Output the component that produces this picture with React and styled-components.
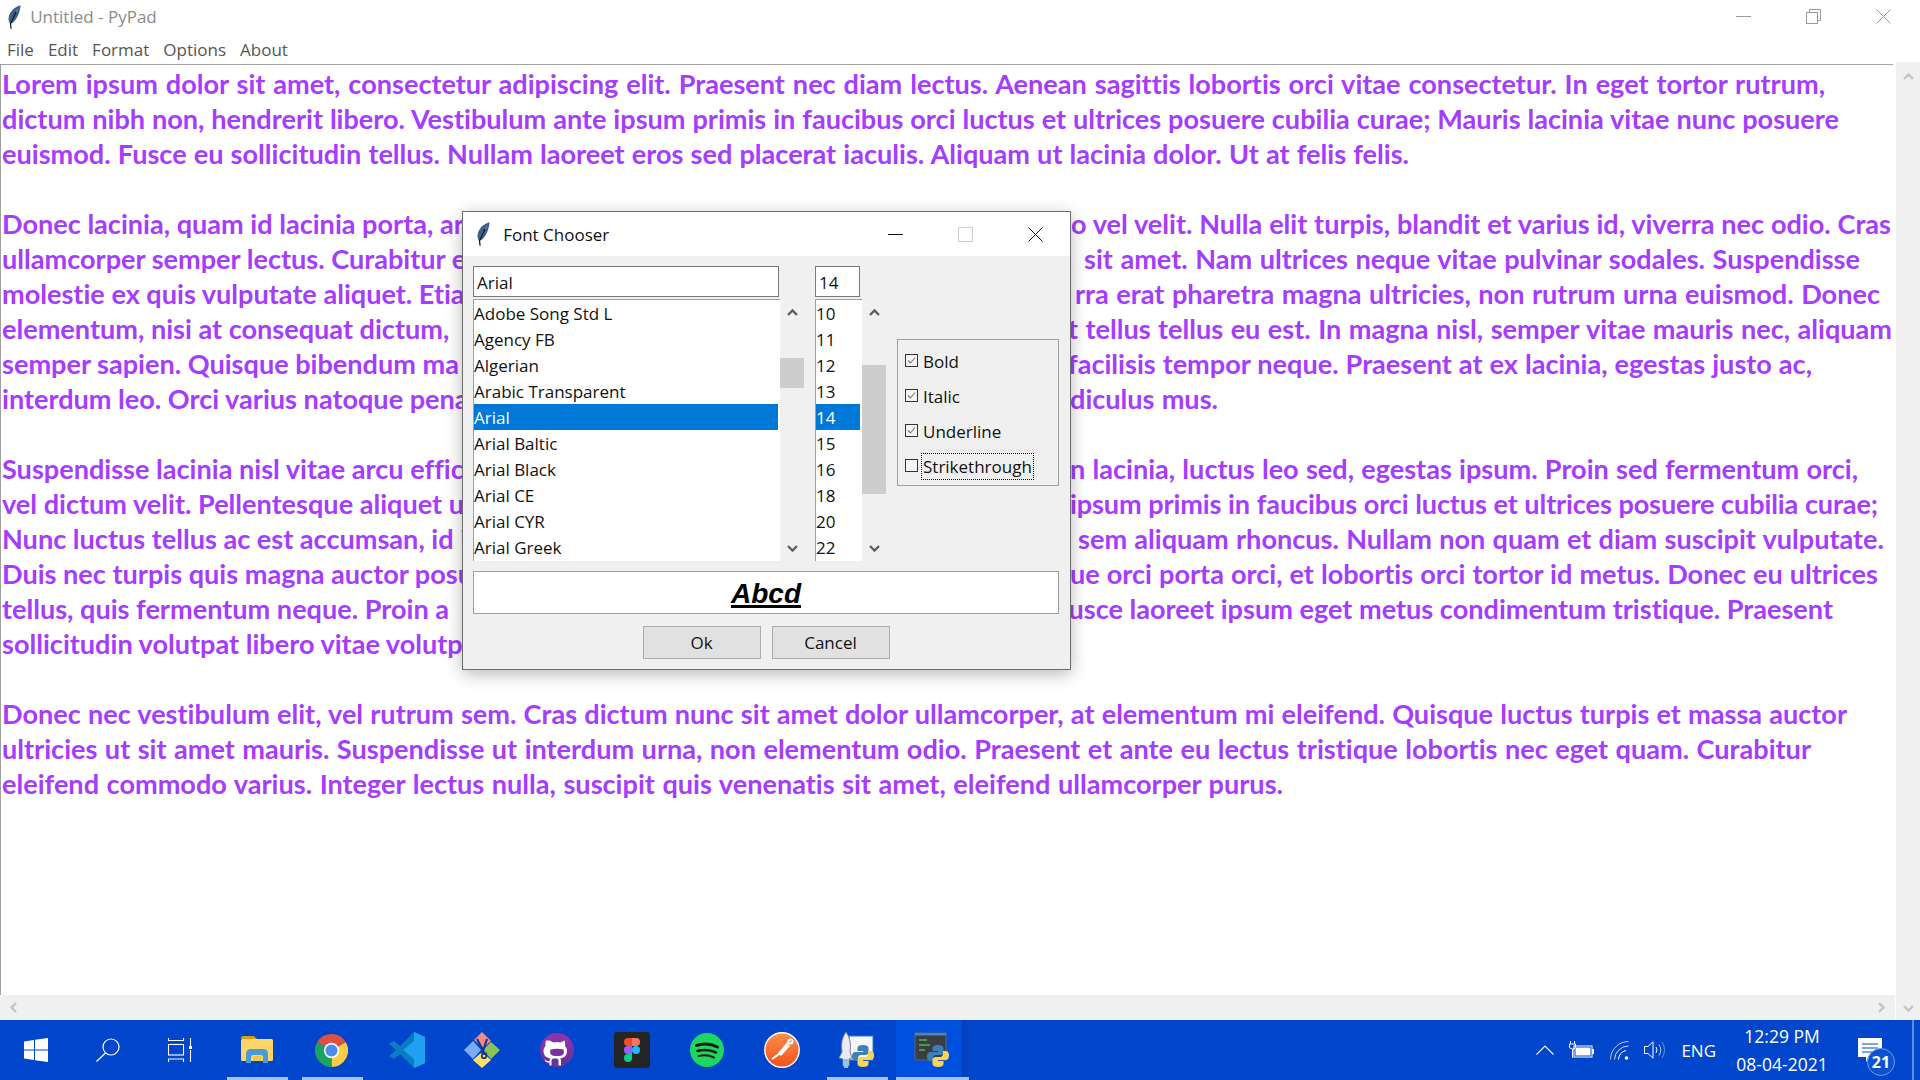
import React from 'react'
import styled, {createGlobalStyle} from 'styled-components'

const Global = createGlobalStyle`
  html, body {
    margin: 0;
    padding: 0;
    background: #fff;
  }
  * {
    box-sizing: border-box;
  }
`

const UI_FONT = `"Open Sans", "Noto Sans", sans-serif`

// main window
const Page = styled.div`
  position: relative;
  width: 1920px;
  height: 1080px;
  overflow: hidden;
  display: flex;
  flex-direction: column;
  font-family: ${UI_FONT};
`
const TitleBar = styled.div`
  height: 33px;
  flex: none;
  display: flex;
  align-items: center;
  padding-left: 8px;
  background: #fff;
`
const TitleText = styled.span`
  margin-left: 9px;
  font-size: 17px;
  color: #8b8b8b;
`
const WinButtons = styled.div`
  margin-left: auto;
  display: flex;
  align-items: center;
  gap: 55px;
  padding-right: 29px;
  padding-bottom: 1px;
  height: 100%;
`
const MenuBar = styled.div`
  height: 29px;
  flex: none;
  display: flex;
  align-items: center;
  padding: 4px 0 0 7px;
  gap: 14px;
  font-size: 17px;
  color: #555;
`
const Workspace = styled.div`
  flex: 1;
  min-height: 0;
  display: flex;
`
const EditorColumn = styled.div`
  flex: 1;
  min-width: 0;
  display: flex;
  flex-direction: column;
`
const Editor = styled.div`
  flex: 1;
  min-height: 0;
  margin-top: 2px;
  margin-right: 2px;
  border-top: 1px solid #a0a0a0;
  border-left: 1px solid #a0a0a0;
  padding: 1px 0 0 1px;
  overflow: hidden;
  background: #fff;
  font-family: "Lato", "Noto Sans", sans-serif;
  font-weight: 700;
  font-size: 27.1px;
  font-variant-ligatures: none;
  line-height: 35px;
  color: #a53cff;
`
const Line = styled.div`
  height: 35px;
  display: flex;
  justify-content: space-between;
  white-space: nowrap;
  width: ${({$w})=> $w ? `${$w}px` : 'auto'};
`
// a run of text that fills its width, its word gaps stretched to reach the end
const FullRun = styled.span`
  flex: ${({$w})=> $w ? `none` : 1};
  width: ${({$w})=> $w ? `${$w}px` : 'auto'};
  white-space: normal;
  text-align: justify;
  text-align-last: justify;
  letter-spacing: ${({$tight})=> $tight ? '-0.12px' : 'normal'};
`
const HScroll = styled.div`
  height: 25px;
  flex: none;
  display: flex;
  align-items: center;
  justify-content: space-between;
  padding: 0 8px;
  background: #f0f0f0;
`
const VScroll = styled.div`
  width: 25px;
  flex: none;
  display: flex;
  flex-direction: column;
  align-items: center;
  justify-content: space-between;
  padding: 10px 0 7px;
  background: #f0f0f0;
  border-left: 1px solid #fff;
`
const ChevronSvg = styled.svg`
  display: block;
  transform: rotate(${({$turn})=> $turn}deg);
`

// font chooser dialog
const Dialog = styled.div`
  position: absolute;
  left: 462px;
  top: 211px;
  width: 609px;
  height: 459px;
  background: #f0f0f0;
  border: 1px solid #6e6e6e;
  box-shadow: 0 4px 16px rgba(0, 0, 0, 0.28);
  font-size: 17px;
  color: #111;
`
const DialogTitle = styled.div`
  height: 44px;
  display: flex;
  align-items: center;
  padding-left: 14px;
  background: #fff;
`
const DialogTitleText = styled.span`
  margin-left: 13px;
  font-size: 17px;
`
const DialogButtons = styled.div`
  margin-left: auto;
  display: flex;
  align-items: center;
  gap: 55px;
  padding-right: 27px;
`
const DialogBody = styled.div`
  padding: 10px 11px 0 10px;
`
const Chooser = styled.div`
  display: grid;
  grid-template-columns: 307px 24px 11px 47px 24px 11px 162px;
  grid-template-rows: 31px 2px 262px;
`
const Entry = styled.div`
  grid-column: ${({$col})=> $col};
  grid-row: 1;
  width: ${({$w})=> $w}px;
  border: 1px solid #7a7a7a;
  background: #fff;
  display: flex;
  align-items: center;
  padding: 1px 0 0 3px;
  line-height: 1;
`
const ListBox = styled.div`
  grid-column: ${({$col})=> $col};
  grid-row: 3;
  border-top: 1px solid #a0a0a0;
  border-left: 1px solid #a0a0a0;
  background: #fff;
  overflow: hidden;
`
const ListRow = styled.div`
  height: 26px;
  line-height: 27px;
  margin-right: 2px;
  white-space: nowrap;
  background: ${({$on})=> $on ? '#0078d7' : 'transparent'};
  color: ${({$on})=> $on ? '#fff' : '#111'};
`
const ListScroll = styled.div`
  grid-column: ${({$col})=> $col};
  grid-row: 3;
  position: relative;
  display: flex;
  flex-direction: column;
  align-items: center;
  justify-content: space-between;
  padding: 9px 0 8px;
`
const Thumb = styled.div`
  position: absolute;
  left: 0;
  right: 0;
  top: ${({$top})=> $top}px;
  height: ${({$h})=> $h}px;
  background: #cdcdcd;
`
const OptionGroup = styled.div`
  grid-column: 7;
  grid-row: 3;
  align-self: start;
  margin-top: 40px;
  height: 147px;
  border: 1px solid #a0a0a0;
  padding: 3px 0 0 7px;
`
const Option = styled.label`
  height: 35px;
  display: flex;
  align-items: center;
  gap: 4px;
`
const CheckBox = styled.span`
  width: 13px;
  height: 13px;
  flex: none;
  border: 1px solid #333;
  background: #f6f6f6;
  display: flex;
  align-items: center;
  justify-content: center;
`
const OptionText = styled.span`
  line-height: 25px;
  margin-top: 2px;
  padding: 0 1px;
  outline: ${({$focus})=> $focus ? '1px dotted #111' : 'none'};
`
const Preview = styled.div`
  margin-top: 10px;
  height: 43px;
  border: 1px solid #a0a0a0;
  background: #fff;
  display: flex;
  align-items: center;
  justify-content: center;
  padding-top: 2px;
  font-family: "Liberation Sans", Arial, sans-serif;
  font-weight: 700;
  font-style: italic;
  text-decoration: underline;
  text-decoration-thickness: 3px;
  font-size: 28px;
  color: #000;
`
const ButtonRow = styled.div`
  margin-top: 12px;
  display: flex;
  justify-content: center;
  gap: 11px;
`
const DialogButton = styled.button`
  width: 118px;
  height: 33px;
  border: 1px solid #adadad;
  background: #e1e1e1;
  font-family: ${UI_FONT};
  font-size: 17px;
  color: #111;
  padding: 0;
`

// taskbar
const Taskbar = styled.div`
  position: relative;
  height: 60px;
  flex: none;
  display: flex;
  align-items: stretch;
  background: #0046cc;
  color: #fff;
`
const SystemSlot = styled.div`
  width: 72px;
  display: flex;
  align-items: center;
  justify-content: center;
`
const AppStrip = styled.div`
  display: flex;
  padding-left: 3px;
`
const AppSlot = styled.div`
  position: relative;
  width: 75px;
  display: flex;
  align-items: center;
  justify-content: center;
  background: ${({$active})=> $active ? 'linear-gradient(to right, transparent 2px, #0050e0 2px, #0050e0 68px, #003fb8 68px, #0046cc 75px)' : 'transparent'};
  &::after {
    content: '';
    display: ${({$open})=> $open ? 'block' : 'none'};
    position: absolute;
    bottom: 0;
    height: 3px;
    left: ${({$active})=> $active ? '2px' : '8px'};
    right: ${({$active})=> $active ? '0' : '6px'};
    background: #a9c2f5;
  }
`
const Tray = styled.div`
  margin-left: auto;
  display: flex;
  align-items: center;
  padding-right: 28px;
`
const TrayIcon = styled.span`
  display: flex;
  margin-right: ${({$gap})=> $gap}px;
`
const Lang = styled.span`
  font-size: 17px;
  margin-right: 8px;
`
const Clock = styled.div`
  width: 116px;
  text-align: center;
  font-size: 17.5px;
  line-height: 28px;
  margin-right: 18px;
`
const Notice = styled.div`
  position: relative;
  width: 34px;
  height: 60px;
  display: flex;
  padding-top: 18px;
`
const NoticeBadge = styled.span`
  position: absolute;
  left: 9px;
  top: 28px;
  width: 28px;
  height: 28px;
  border-radius: 50%;
  background: #0a52d0;
  border: 1px solid #6f9cec;
  display: flex;
  align-items: center;
  justify-content: center;
  font-size: 16px;
  font-weight: 700;
`
const EdgeLine = styled.div`
  position: absolute;
  right: 6px;
  top: 0;
  bottom: 0;
  width: 2px;
  background: #5d8be2;
`

// little drawings
const Feather = ({h = 24}) => (
  <svg width={h * 0.55} height={h} viewBox="0 0 13 24" style={{display: 'block', flex: 'none'}}>
    <path d="M12.500 0.300C6.500 1.500 1 7 .4 13.500c-.2 2.200.8 4.200 2 5.500C7.500 17 11.800 9 12.500.3z" fill="#3f5f8c" />
    <path d="M10 4L3 16" stroke="#8aa3c6" strokeWidth="0.700" />
    <path d="M8 7L2.400 18.500 3 23.800" stroke="#0c0c0c" strokeWidth="1.200" fill="none" />
  </svg>
)

const Chevron = ({turn = 0, color = '#5f5f5f'}) => (
  <ChevronSvg $turn={turn} width="11" height="9" viewBox="0 0 11 9">
    <polyline points="1,7 5.5,2.5 10,7" fill="none" stroke={color} strokeWidth="2.4" />
  </ChevronSvg>
)

const Minimize = ({color, w = 15}) => (
  <svg width={w} height="15" viewBox="0 0 15 15" style={{display: 'block'}}>
    <path d="M0 7.5H15" stroke={color} strokeWidth="1" />
  </svg>
)
const Restore = ({color}) => (
  <svg width="15" height="15" viewBox="0 0 15 15" style={{display: 'block'}}>
    <rect x="0.5" y="3.5" width="11" height="11" fill="none" stroke={color} />
    <path d="M3.5 3.5V0.5H14.5V11.5H11.5" fill="none" stroke={color} />
  </svg>
)
const Square = ({color}) => (
  <svg width="15" height="15" viewBox="0 0 15 15" style={{display: 'block'}}>
    <rect x="0.5" y="0.5" width="14" height="14" fill="none" stroke={color} />
  </svg>
)
const Close = ({color, w = 15}) => (
  <svg width={w} height={w} viewBox="0 0 15 15" style={{display: 'block'}}>
    <path d="M0.5 0.5L14.5 14.5M14.5 0.5L0.5 14.5" stroke={color} strokeWidth="1" />
  </svg>
)
const Tick = () => (
  <svg width="9" height="9" viewBox="0 0 9 9">
    <polyline points="1,4.5 3.5,7 8,1.5" fill="none" stroke="#777" strokeWidth="1.1" />
  </svg>
)

const WindowsLogo = () => (
  <svg width="24" height="24" viewBox="0 0 24 24" fill="#fff">
    <path d="M0 3.4L10 2v9.4H0zM11 1.8L24 0v11.4H11zM0 12.5h10V22L0 20.6zM11 12.5h13V24l-13-1.8z" />
  </svg>
)
const SearchIcon = () => (
  <svg width="24" height="24" viewBox="0 0 24 24" fill="none" stroke="#fff" strokeWidth="1.2">
    <circle cx="15" cy="9" r="8" />
    <path d="M9.5 15L0.5 23.5" />
  </svg>
)
const TaskViewIcon = () => (
  <svg width="24" height="24" viewBox="0 0 24 24" fill="none" stroke="#fff" strokeWidth="1.1">
    <path d="M0.5 0v2.5h15V0M0.5 24v-3h15v3" />
    <rect x="0.5" y="6.5" width="15" height="10.5" />
    <path d="M22.5 0v8M22.5 12v12" />
    <rect x="21" y="8" width="3" height="3" fill="#fff" stroke="none" />
  </svg>
)
const ExplorerIcon = () => (
  <svg width="32" height="28" viewBox="0 0 32 28">
    <path d="M0 2q0-2 2-2h11l3 3h-16z" fill="#d99e12" />
    <rect x="0" y="3" width="32" height="22" rx="1.5" fill="#fdd667" />
    <path d="M5 27v-9q0-5 5-5h12q5 0 5 5v9h-5v-6q0-2-2-2h-8q-2 0-2 2v6z" fill="#4a9cd6" />
    <rect x="12" y="20" width="8" height="5" fill="#f5c945" />
  </svg>
)
const ChromeIcon = () => (
  <svg width="33" height="33" viewBox="0 0 24 24">
    <path d="M12 12L1.6 6A12 12 0 0 1 22.4 6z" fill="#dd5044" />
    <path d="M12 12L22.4 6A12 12 0 0 1 12 24z" fill="#fbcc45" />
    <path d="M12 12L12 24A12 12 0 0 1 1.6 6z" fill="#1da261" />
    <circle cx="12" cy="12" r="5.6" fill="#fff" />
    <circle cx="12" cy="12" r="4.4" fill="#4d8df0" />
  </svg>
)
const VsCodeIcon = () => (
  <svg width="36" height="36" viewBox="0 0 36 36">
    <path d="M25 0L11 14 5 9 0 12l7 6-7 6 5 3 6-5 14 14 3-2V2z" fill="#0a7cc4" />
    <path d="M25 0l11 5v26l-11 5 3-2V2z" fill="#1fa0f0" />
    <path d="M25 0l11 5v26l-11 5zM25 9L14 18l11 9z" fill="#1fa0f0" fillRule="evenodd" />
  </svg>
)
const ToolIcon = () => (
  <svg width="36" height="36" viewBox="0 0 36 36">
    <path d="M18 0l9 9-8 7-9-8z" fill="#f58a84" />
    <path d="M9 9l8 9-8 9-9-9z" fill="#7cabff" />
    <path d="M27 10l9 8-9 9-8-9z" fill="#8ac354" />
    <path d="M18 20l9 8-9 8-9-8z" fill="#ffe067" />
    <path d="M13 7l7 13M23 7l-4 12M16 20l7 2" stroke="#17368f" strokeWidth="2.200" fill="none" />
    <circle cx="20" cy="24" r="2.200" fill="none" stroke="#17368f" strokeWidth="1.800" />
  </svg>
)
const GithubIcon = () => (
  <svg width="34" height="34" viewBox="0 0 34 34">
    <defs>
      <linearGradient id="gh" x1="0" y1="0" x2="0" y2="1">
        <stop offset="0" stopColor="#9135ad" />
        <stop offset="1" stopColor="#63309c" />
      </linearGradient>
    </defs>
    <circle cx="17" cy="17" r="17" fill="url(#gh)" />
    <path d="M9.5 7.500l4 2a12 12 0 0 1 7 0l4-2q1.300 3 .5 5.500c1.400 1.600 2 3 2 5 0 5-3.500 7-7 7.500 1 .7 1 2 1 3v4h-2.500v-5q0-2-2-2h-3q-2 0-2 2v5H9.500v-3c-2.500.4-4-.5-5-3 1.500.5 2.800 2.300 5 1.500q0-1.500 1-2.500c-3.500-.5-7-2.500-7-7.500 0-2 .6-3.400 2-5q-.8-2.500 .5-5.500z" fill="#fff" />
    <path d="M10.500 16.500q6.500-1.500 13 0 1.500 5-2.500 6.200-4 .8-8 0-4-1.200-2.500-6.200z" fill="#7a30a4" />
  </svg>
)
const FigmaIcon = () => (
  <svg width="36" height="36" viewBox="0 0 36 36">
    <rect width="36" height="36" rx="3" fill="#252525" />
    <path d="M18 6h-4a4 4 0 0 0 0 8h4z" fill="#f24e1e" />
    <path d="M18 6h4a4 4 0 0 1 0 8h-4z" fill="#ff7262" />
    <path d="M18 14h-4a4 4 0 0 0 0 8h4z" fill="#a259ff" />
    <circle cx="22" cy="18" r="4" fill="#1abcfe" />
    <path d="M14 22h4v4a4 4 0 1 1-4-4z" fill="#0acf83" />
  </svg>
)
const SpotifyIcon = () => (
  <svg width="34" height="34" viewBox="0 0 34 34">
    <circle cx="17" cy="17" r="17" fill="#1ed760" />
    <g fill="none" stroke="#1a1a1a" strokeLinecap="round">
      <path d="M6.500 12.500q11-3.500 21 1.500" strokeWidth="3" />
      <path d="M7.500 18q9.500-2.800 18.500 1.500" strokeWidth="2.500" />
      <path d="M8.500 23q8.500-2 15.500 1.500" strokeWidth="2" />
    </g>
  </svg>
)
const PostmanIcon = () => (
  <svg width="36" height="36" viewBox="0 0 36 36">
    <defs>
      <linearGradient id="pm" x1="0" y1="0" x2="0" y2="1">
        <stop offset="0" stopColor="#ff8f4a" />
        <stop offset="1" stopColor="#f2501f" />
      </linearGradient>
    </defs>
    <circle cx="18" cy="18" r="17.200" fill="url(#pm)" stroke="#fff" strokeWidth="1.400" />
    <path d="M8 27l7-5 9-11" stroke="#fff" strokeWidth="2" fill="none" />
    <path d="M14 21l9-10 3 3-9 10z" fill="#fff" />
    <circle cx="26.500" cy="9.500" r="3" fill="#fff" />
    <path d="M25 10.500l3-2" stroke="#f2501f" strokeWidth="0.800" />
  </svg>
)
const PythonLogo = ({size}) => (
  <svg width={size} height={size} viewBox="0 0 24 24" style={{position: 'absolute', right: 0, bottom: 0}}>
    <path d="M12 1c-3.500 0-5.500 1-5.500 3v3h5.500v1H4.500C2 8 1 10 1 12.500S2 17 4.500 17H7v-3c0-1.800 1.500-3 3-3h4.500c1.500 0 3-1.200 3-3V4c0-2-2.500-3-5.500-3z" fill="#3f7fb5" />
    <path d="M12 23c3.500 0 5.500-1 5.500-3v-3H12v-1h7.500c2.500 0 3.500-2 3.500-4.500S22 7 19.500 7H17v3c0 1.800-1.500 3-3 3H9.500c-1.500 0-3 1.200-3 3v4c0 2 2.500 3 5.500 3z" fill="#f7d558" />
  </svg>
)
const AppArt = styled.span`
  position: relative;
  display: block;
  width: ${({$w})=> $w}px;
  height: ${({$h})=> $h}px;
`
const RocketPyIcon = () => (
  <AppArt $w={36} $h={36}>
    <svg width="36" height="36" viewBox="0 0 36 36" style={{display: 'block'}}>
      <rect x="10" y="4" width="24" height="24" fill="#f4f6fa" stroke="#2b7fc0" />
      <path d="M7 0q-6 8-4 20l-3 6 4 1v7h6v-7l3-1-2-6Q13 8 7 0z" fill="#e8ecf2" stroke="#7a8496" strokeWidth="1" />
      <rect x="5" y="27" width="4" height="9" fill="#8fc4ee" />
    </svg>
    <PythonLogo size={24} />
  </AppArt>
)
const ConsolePyIcon = () => (
  <AppArt $w={36} $h={36}>
    <svg width="36" height="36" viewBox="0 0 36 36" style={{display: 'block'}}>
      <rect x="1" y="1" width="31" height="27" fill="#3a3d42" stroke="#5e6570" />
      <rect x="1" y="1" width="31" height="2.500" fill="#3f8ac4" />
      <path d="M5 8h8M5 13h11M5 18h6" stroke="#58b25a" strokeWidth="1.400" />
    </svg>
    <PythonLogo size={24} />
  </AppArt>
)

const UpCaret = () => (
  <svg width="18" height="10" viewBox="0 0 18 10" fill="none" stroke="#fff" strokeWidth="1.100" style={{display: 'block'}}>
    <polyline points="0.500,9.500 9,1 17.500,9.500" />
  </svg>
)
const BatteryIcon = () => (
  <svg width="25" height="18" viewBox="0 0 25 18" style={{display: 'block'}}>
    <path d="M1.500 0v3M5.500 0v3M0.500 3h6v3q0 2-3 2t-3-2zM3.500 8v9" stroke="#fff" strokeWidth="1" fill="none" />
    <rect x="5" y="5" width="18" height="11" fill="none" stroke="#fff" />
    <rect x="6.500" y="6.500" width="15" height="8" fill="#fff" />
    <rect x="23" y="8" width="2" height="5" fill="#fff" />
  </svg>
)
const WifiIcon = () => (
  <svg width="19" height="19" viewBox="0 0 19 19" fill="none" stroke="#fff" style={{display: 'block'}}>
    <path d="M0.500 18.500A18 18 0 0 1 18.500 0.500" strokeWidth="1" opacity="0.700" />
    <path d="M4.500 18.500A14 14 0 0 1 18.500 5" strokeWidth="1" opacity="0.800" />
    <path d="M8.500 18.500A10 10 0 0 1 16 9.500" strokeWidth="1" />
    <circle cx="16.500" cy="17" r="1.800" fill="#fff" stroke="none" />
  </svg>
)
const SpeakerIcon = () => (
  <svg width="22" height="18" viewBox="0 0 22 18" fill="none" stroke="#fff" strokeWidth="1" style={{display: 'block'}}>
    <path d="M0.500 5.500h3.500L9 0.800v16.400L4 12.500H0.500z" />
    <path d="M12 6q2 3 0 6" />
    <path d="M15 3.500q3.500 5.500 0 11" opacity="0.700" />
    <path d="M18 1q5 8 0 16" opacity="0.400" />
  </svg>
)
const NoticeIcon = () => (
  <svg width="24" height="24" viewBox="0 0 24 24" style={{display: 'block'}}>
    <path d="M0 0h24v19H11l-3 5v-5H0z" fill="#fff" />
    <path d="M4 6h16M4 10h16M4 14h10" stroke="#0046cc" strokeWidth="1.200" />
  </svg>
)

// each line: the text left of the dialog, the text right of it, where the line ends
// and how wide the right part is
const sections = [
  ['Lorem ipsum dolor sit amet, consectetur adipiscing elit. Praesent nec diam lectus. Aenean sagittis lobortis orci vitae consectetur. In eget tortor rutrum,', null, 1823],
  ['dictum nibh non, hendrerit libero. Vestibulum ante ipsum primis in faucibus orci luctus et ultrices posuere cubilia curae; Mauris lacinia vitae nunc posuere', null, 1837],
  ['euismod. Fusce eu sollicitudin tellus. Nullam laoreet eros sed placerat iaculis. Aliquam ut lacinia dolor. Ut at felis felis.', null, 1407],
  [''],
  ['Donec lacinia, quam id lacinia porta, ar', 'o vel velit. Nulla elit turpis, blandit et varius id, viverra nec odio. Cras', 1889, 820],
  ['ullamcorper semper lectus. Curabitur e', 'sit amet. Nam ultrices neque vitae pulvinar sodales. Suspendisse', 1858, 776],
  ['molestie ex quis vulputate aliquet. Etia', 'rra erat pharetra magna ultricies, non rutrum urna euismod. Donec', 1878, 805],
  ['elementum, nisi at consequat dictum,', 't tellus tellus eu est. In magna nisl, semper vitae mauris nec, aliquam', 1890, 824],
  ['semper sapien. Quisque bibendum ma', 'facilisis tempor neque. Praesent at ex lacinia, egestas justo ac,', 1810, 744],
  ['interdum leo. Orci varius natoque pena', 'diculus mus.', 1216, 148],
  [''],
  ['Suspendisse lacinia nisl vitae arcu effic', 'n lacinia, luctus leo sed, egestas ipsum. Proin sed fermentum orci,', 1856, 788],
  ['vel dictum velit. Pellentesque aliquet u', 'ipsum primis in faucibus orci luctus et ultrices posuere cubilia curae;', 1876, 808, true],
  ['Nunc luctus tellus ac est accumsan, id i', 'sem aliquam rhoncus. Nullam non quam et diam suscipit vulputate.', 1882, 806],
  ['Duis nec turpis quis magna auctor posu', 'ue orci porta orci, et lobortis orci tortor id metus. Donec eu ultrices', 1876, 808],
  ['tellus, quis fermentum neque. Proin a', 'usce laoreet ipsum eget metus condimentum tristique. Praesent', 1831],
  ['sollicitudin volutpat libero vitae volutp'],
  [''],
  ['Donec nec vestibulum elit, vel rutrum sem. Cras dictum nunc sit amet dolor ullamcorper, at elementum mi eleifend. Quisque luctus turpis et massa auctor', null, 1845],
  ['ultricies ut sit amet mauris. Suspendisse ut interdum urna, non elementum odio. Praesent et ante eu lectus tristique lobortis nec eget quam. Curabitur', null, 1809],
  ['eleifend commodo varius. Integer lectus nulla, suscipit quis venenatis sit amet, eleifend ullamcorper purus.', null, 1281],
]

const fonts = ['Adobe Song Std L', 'Agency FB', 'Algerian', 'Arabic Transparent', 'Arial', 'Arial Baltic', 'Arial Black', 'Arial CE', 'Arial CYR', 'Arial Greek']
const sizes = ['10', '11', '12', '13', '14', '15', '16', '18', '20', '22']
const options = [['Bold', true], ['Italic', true], ['Underline', true], ['Strikethrough', false]]
const menus = ['File', 'Edit', 'Format', 'Options', 'About']

const apps = [
  {icon: <ExplorerIcon />, open: true},
  {icon: <ChromeIcon />, open: true},
  {icon: <VsCodeIcon />},
  {icon: <ToolIcon />},
  {icon: <GithubIcon />},
  {icon: <FigmaIcon />},
  {icon: <SpotifyIcon />},
  {icon: <PostmanIcon />},
  {icon: <RocketPyIcon />, open: true},
  {icon: <ConsolePyIcon />, open: true, active: true},
]

const App = () => {
  return (
    <Page>
      <Global />
      <TitleBar>
        <Feather />
        <TitleText>Untitled - PyPad</TitleText>
        <WinButtons>
          <Minimize color="#9a9a9a" />
          <Restore color="#9a9a9a" />
          <Close color="#9a9a9a" />
        </WinButtons>
      </TitleBar>
      <MenuBar>
        {menus.map((m)=> <span key={m}>{m}</span>)}
      </MenuBar>
      <Workspace>
        <EditorColumn>
          <Editor>
            {sections.map(([left, right, end, rightWidth, tight], i)=>(
              <Line key={i} $w={end}>
                {right || !end ? <span>{left}</span> : <FullRun>{left}</FullRun>}
                {right && (rightWidth
                  ? <FullRun $w={rightWidth} $tight={tight}>{right}</FullRun>
                  : <span>{right}</span>)}
              </Line>
            ))}
          </Editor>
          <HScroll>
            <Chevron turn={-90} color="#c4c4c4" />
            <Chevron turn={90} color="#c4c4c4" />
          </HScroll>
        </EditorColumn>
        <VScroll>
          <Chevron color="#c4c4c4" />
          <Chevron turn={180} color="#c4c4c4" />
        </VScroll>
      </Workspace>
      <Taskbar>
        <SystemSlot><WindowsLogo /></SystemSlot>
        <SystemSlot><SearchIcon /></SystemSlot>
        <SystemSlot><TaskViewIcon /></SystemSlot>
        <AppStrip>
          {apps.map((a, i)=>(
            <AppSlot key={i} $open={a.open} $active={a.active}>{a.icon}</AppSlot>
          ))}
        </AppStrip>
        <Tray>
          <TrayIcon $gap={15}><UpCaret /></TrayIcon>
          <TrayIcon $gap={16}><BatteryIcon /></TrayIcon>
          <TrayIcon $gap={15}><WifiIcon /></TrayIcon>
          <TrayIcon $gap={15}><SpeakerIcon /></TrayIcon>
          <Lang>ENG</Lang>
          <Clock>12:29 PM<br />08-04-2021</Clock>
          <Notice>
            <NoticeIcon />
            <NoticeBadge>21</NoticeBadge>
          </Notice>
        </Tray>
        <EdgeLine />
      </Taskbar>

      <Dialog>
        <DialogTitle>
          <Feather h={24} />
          <DialogTitleText>Font Chooser</DialogTitleText>
          <DialogButtons>
            <Minimize color="#111" />
            <Square color="#cfcfcf" />
            <Close color="#111" />
          </DialogButtons>
        </DialogTitle>
        <DialogBody>
          <Chooser>
            <Entry $col={1} $w={306}>Arial</Entry>
            <Entry $col={4} $w={45}>14</Entry>
            <ListBox $col={1}>
              {fonts.map((f)=> <ListRow key={f} $on={f === 'Arial'}>{f}</ListRow>)}
            </ListBox>
            <ListScroll $col={2}>
              <Thumb $top={59} $h={30} />
              <Chevron />
              <Chevron turn={180} />
            </ListScroll>
            <ListBox $col={4}>
              {sizes.map((s)=> <ListRow key={s} $on={s === '14'}>{s}</ListRow>)}
            </ListBox>
            <ListScroll $col={5}>
              <Thumb $top={66} $h={129} />
              <Chevron />
              <Chevron turn={180} />
            </ListScroll>
            <OptionGroup>
              {options.map(([label, on])=>(
                <Option key={label}>
                  <CheckBox>{on && <Tick />}</CheckBox>
                  <OptionText $focus={!on}>{label}</OptionText>
                </Option>
              ))}
            </OptionGroup>
          </Chooser>
          <Preview>Abcd</Preview>
          <ButtonRow>
            <DialogButton>Ok</DialogButton>
            <DialogButton>Cancel</DialogButton>
          </ButtonRow>
        </DialogBody>
      </Dialog>
    </Page>
  )
}

export default App
